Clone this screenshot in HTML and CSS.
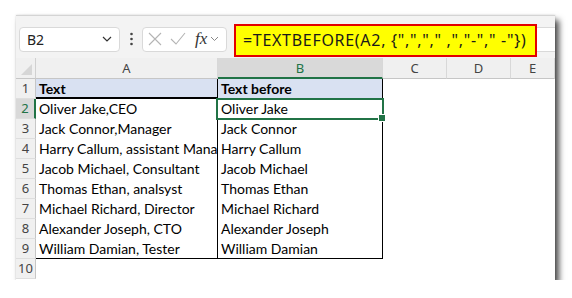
FILE: index.html
```html
<!DOCTYPE html>
<html lang="en">
<head>
	<meta charset="UTF-8">
	<title>TEXTBEFORE</title>
	<link rel="stylesheet" href="styles.css">
</head>
<body>
	<div class="window">
		<div class="toolbar">
			<div class="namebox">
				<span>B2</span>
				<svg width="10" height="6" viewBox="0 0 10 6"><path d="M1 1l4 4 4-4" fill="none" stroke="#333" stroke-width="1.2"/></svg>
			</div>
			<svg class="dots" width="3" height="14" viewBox="0 0 3 14"><circle cx="1.5" cy="2" r="1.3" fill="#444"/><circle cx="1.5" cy="7" r="1.3" fill="#444"/><circle cx="1.5" cy="12" r="1.3" fill="#444"/></svg>
			<div class="fxgroup">
				<svg width="14" height="14" viewBox="0 0 14 14"><path d="M1 1l12 12M13 1L1 13" stroke="#b4b4b4" stroke-width="1.1"/></svg>
				<svg width="16" height="14" viewBox="0 0 16 14"><path d="M1 7l5 5L15 1" fill="none" stroke="#b4b4b4" stroke-width="1.1"/></svg>
				<span class="fx">fx</span>
				<svg width="9" height="6" viewBox="0 0 9 6"><path d="M1 1l3.5 3.5L8 1" fill="none" stroke="#888" stroke-width="1"/></svg>
			</div>
			<div class="formula">
				<div class="mark">=TEXTBEFORE(A2, {",","," ,","-"," -"})</div>
			</div>
		</div>
		<div class="sheet">
			<div class="corner"></div>
			<div class="colhead">A</div>
			<div class="colhead active">B</div>
			<div class="colhead">C</div>
			<div class="colhead">D</div>
			<div class="colhead">E</div>

			<div class="rowhead">1</div>
			<div class="cell ca hdr first">Text</div>
			<div class="cell cb hdr">Text before</div>
			<div class="cell"></div><div class="cell"></div><div class="cell"></div>

			<div class="rowhead active">2</div>
			<div class="cell ca">Oliver Jake,CEO</div>
			<div class="cell cb sel">Oliver Jake</div>
			<div class="cell"></div><div class="cell"></div><div class="cell"></div>

			<div class="rowhead">3</div>
			<div class="cell ca">Jack Connor,Manager</div>
			<div class="cell cb">Jack Connor</div>
			<div class="cell"></div><div class="cell"></div><div class="cell"></div>

			<div class="rowhead">4</div>
			<div class="cell ca">Harry Callum, assistant Manager</div>
			<div class="cell cb">Harry Callum</div>
			<div class="cell"></div><div class="cell"></div><div class="cell"></div>

			<div class="rowhead">5</div>
			<div class="cell ca">Jacob Michael, Consultant</div>
			<div class="cell cb">Jacob Michael</div>
			<div class="cell"></div><div class="cell"></div><div class="cell"></div>

			<div class="rowhead">6</div>
			<div class="cell ca">Thomas Ethan, analsyst</div>
			<div class="cell cb">Thomas Ethan</div>
			<div class="cell"></div><div class="cell"></div><div class="cell"></div>

			<div class="rowhead">7</div>
			<div class="cell ca">Michael Richard, Director</div>
			<div class="cell cb">Michael Richard</div>
			<div class="cell"></div><div class="cell"></div><div class="cell"></div>

			<div class="rowhead">8</div>
			<div class="cell ca">Alexander Joseph, CTO</div>
			<div class="cell cb">Alexander Joseph</div>
			<div class="cell"></div><div class="cell"></div><div class="cell"></div>

			<div class="rowhead">9</div>
			<div class="cell ca last">William Damian, Tester</div>
			<div class="cell cb last">William Damian</div>
			<div class="cell"></div><div class="cell"></div><div class="cell"></div>

			<div class="rowhead">10</div>
			<div class="cell"></div><div class="cell"></div>
			<div class="cell"></div><div class="cell"></div><div class="cell"></div>
		</div>
	</div>
</body>
</html>
```

FILE: styles.css
```css
* {
	box-sizing: border-box;
}

body {
	margin: 0;
	background-color: #fff;
	font-family: "Noto Sans", sans-serif;
}

.window {
	width: 539px;
	height: 265px;
	margin: 15px 0 0 16px;
	background-color: #fff;
	border-top: 1px solid #d4d4d4;
	box-shadow: 4px 5px 6px rgba(0, 0, 0, 0.7), 0 0 2px rgba(0, 0, 0, 0.15);
	overflow: hidden;
}

/* formula bar row */
.toolbar {
	height: 42px;
	background-color: #f3f3f3;
	display: flex;
	align-items: center;
	padding: 4px 0 0 3px;
}

.namebox {
	width: 101px;
	height: 25px;
	background-color: #fff;
	border: 1px solid #d9d9d9;
	border-radius: 4px;
	display: flex;
	align-items: center;
	justify-content: space-between;
	padding: 0 7px 0 7px;
	font-size: 14px;
	color: #222;
}

.dots {
	margin: 0 9px 0 10px;
}

.fxgroup {
	width: 85px;
	height: 25px;
	background-color: #fff;
	border: 1px solid #d9d9d9;
	border-radius: 4px;
	display: flex;
	align-items: center;
	padding: 0 6px 0 5px;
	gap: 8px;
}

.fxgroup .fx {
	font-family: "Liberation Serif", serif;
	font-style: italic;
	font-size: 17px;
	color: #333;
	margin-left: 1px;
	margin-right: -5px;
}

.formula {
	flex: 1;
	height: 25px;
	margin-left: 7px;
	background-color: #fff;
	border: 1px solid #d9d9d9;
	border-right: 0;
	border-radius: 4px 0 0 4px;
	position: relative;
}

.formula .mark {
	position: absolute;
	left: -1px;
	top: -4px;
	width: 303px;
	height: 33px;
	background-color: #ffff00;
	border: 2px solid #e30000;
	padding-left: 7px;
	line-height: 28px;
	font-size: 16px;
	letter-spacing: 0.7px;
	color: #1a1a1a;
	white-space: nowrap;
}

/* grid */
.sheet {
	display: grid;
	grid-template-columns: 20px 182px 165px 64px 64px 44px;
	grid-template-rows: 21px;
	grid-auto-rows: 20px;
}

.corner {
	background-color: #f0f0f0;
	border-right: 1px solid #d0d0d0;
	border-bottom: 1px solid #c6c6c6;
	position: relative;
}

.corner::after {
	content: "";
	position: absolute;
	right: 3px;
	bottom: 3px;
	border-left: 11px solid transparent;
	border-bottom: 11px solid #d6d6d6;
}

.colhead {
	background-color: #f0f0f0;
	border-right: 1px solid #d8d8d8;
	border-bottom: 1px solid #c6c6c6;
	text-align: center;
	font-size: 13px;
	line-height: 20px;
	color: #444;
}

.colhead.active {
	background-color: #d9d9d9;
	border-bottom: 2px solid #217346;
	color: #217346;
}

.rowhead {
	background-color: #f0f0f0;
	border-right: 1px solid #c6c6c6;
	border-bottom: 1px solid #dedede;
	text-align: center;
	font-size: 13px;
	line-height: 19px;
	color: #444;
}

.rowhead.active {
	background-color: #d9d9d9;
	border-right: 2px solid #217346;
	color: #217346;
}

.cell {
	font-family: "Lato", sans-serif;
	font-size: 14px;
	line-height: 20px;
	padding-left: 3px;
	color: #000;
	white-space: nowrap;
	overflow: hidden;
}

.cell.ca {
	border-right: 1px solid #000;
}

.cell.cb {
	border-right: 1px solid #000;
}

.cell.hdr {
	background-color: #d9e1f2;
	font-weight: bold;
}

.cell.first {
	border-bottom: 2px solid #000;
}

.cell.last {
	border-bottom: 1px solid #000;
}

.cell.sel {
	position: relative;
	overflow: visible;
}

.cell.sel::after {
	content: "";
	position: absolute;
	left: -2px;
	top: -1px;
	right: -2px;
	bottom: -1px;
	border: 2px solid #217346;
}

.cell.sel::before {
	content: "";
	position: absolute;
	right: -4px;
	bottom: -3px;
	width: 6px;
	height: 6px;
	background-color: #217346;
	border: 1px solid #fff;
	z-index: 1;
}
```
